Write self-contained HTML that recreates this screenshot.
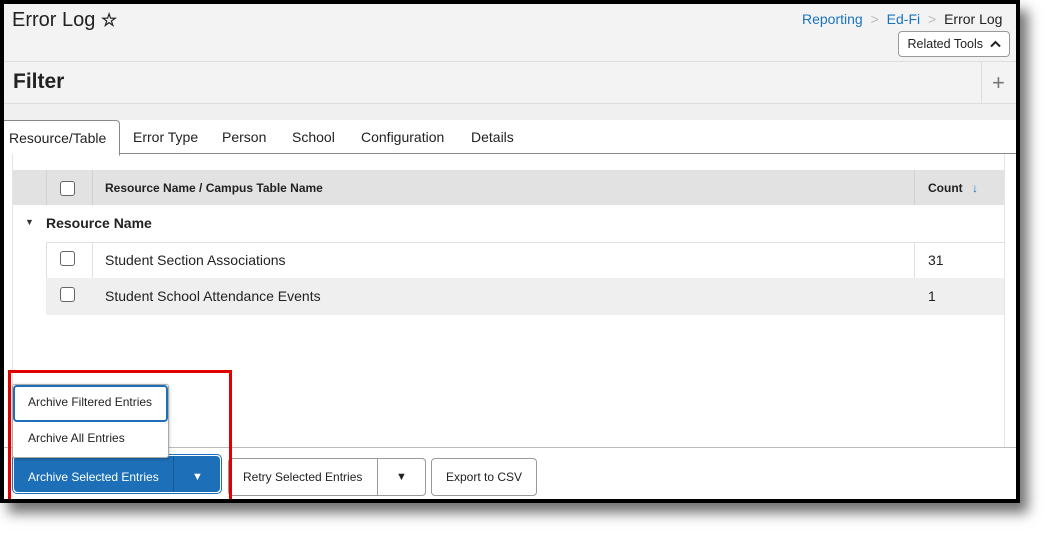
<!DOCTYPE html>
<html><head><style>
body{margin:0;width:1054px;height:538px;background:#fff;font-family:"Liberation Sans",sans-serif;position:relative;overflow:hidden}
.frame{position:absolute;left:0;top:0;width:1012px;height:495px;border:4px solid #000;background:#fff;box-shadow:8px 10px 12px rgba(0,0,0,.55);overflow:hidden}
.a{position:absolute}
.hdr{left:0;top:0;width:1012px;height:57px;background:#f3f3f3;border-bottom:1px solid #ddd}
.flt{left:0;top:58px;width:1012px;height:41px;background:#f3f3f3;border-bottom:1px solid #ddd}
.strip{left:0;top:100px;width:1012px;height:16px;background:#f0f0f0}
.tab{top:125px;font-size:14px;color:#222}
.btn{border:1px solid #999;border-radius:4px;background:#fff;font-size:12px;color:#222}
</style></head><body>
<div class="frame">
<div class="a hdr"></div>
<div class="a" style="left:8px;top:5px;font-size:20px;color:#222">Error Log <span style="font-size:18px;font-weight:bold">☆</span></div>
<div class="a" style="left:798px;top:7px;font-size:14px;color:#1a73c0">Reporting <span style="color:#bbb;margin:0 4px">&gt;</span> Ed-Fi <span style="color:#bbb;margin:0 4px">&gt;</span> <span style="color:#222">Error Log</span></div>
<div class="a btn" style="left:894px;top:27px;width:110px;height:24px;line-height:24px;text-align:center;font-size:12.5px">Related Tools <svg width="11" height="8" viewBox="0 0 11 8" style="margin-left:3px"><path d="M1 6.5L5.5 2 10 6.5" fill="none" stroke="#222" stroke-width="2"/></svg></div>
<div class="a flt"></div>
<div class="a" style="left:977px;top:58px;width:1px;height:41px;background:#ddd"></div>
<div class="a" style="left:9px;top:66px;font-size:21px;font-weight:bold;color:#222">Filter</div>
<div class="a" style="left:988px;top:66px;font-size:22px;color:#777">+</div>
<div class="a strip"></div>
<div class="a" style="left:0;top:149px;width:1012px;height:1px;background:#888"></div>
<div class="a" style="left:0;top:116px;width:115px;height:34px;border:1px solid #888;border-bottom:1px solid #fff;border-left:none;border-radius:0 4px 0 0;background:#fff"></div>
<div class="a tab" style="left:5px;top:126px">Resource/Table</div>
<div class="a tab" style="left:129px">Error Type</div>
<div class="a tab" style="left:218px">Person</div>
<div class="a tab" style="left:288px">School</div>
<div class="a tab" style="left:357px">Configuration</div>
<div class="a tab" style="left:467px">Details</div>
<div class="a" style="left:9px;top:166px;width:991px;height:35px;background:#e2e2e2"></div>
<div class="a" style="left:42px;top:166px;width:1px;height:35px;background:#d0d0d0"></div>
<div class="a" style="left:42px;top:238px;width:1px;height:73px;background:#e0e0e0"></div>
<div class="a" style="left:88px;top:166px;width:1px;height:35px;background:#d0d0d0"></div>
<div class="a" style="left:88px;top:238px;width:1px;height:73px;background:#e0e0e0"></div>
<div class="a" style="left:910px;top:166px;width:1px;height:35px;background:#d0d0d0"></div>
<div class="a" style="left:910px;top:238px;width:1px;height:73px;background:#e0e0e0"></div>
<div class="a" style="left:56px;top:177px;width:13px;height:13px;border:1px solid #666;border-radius:3px;background:#fff"></div>
<div class="a" style="left:101px;top:177px;font-size:12px;font-weight:bold;color:#222">Resource Name / Campus Table Name</div>
<div class="a" style="left:924px;top:177px;font-size:12px;font-weight:bold;color:#222">Count <span style="color:#1a73c0;margin-left:6px">↓</span></div>
<div class="a" style="left:21px;top:213px;font-size:9px;color:#333">▼</div>
<div class="a" style="left:42px;top:211px;font-size:14px;font-weight:bold;color:#222">Resource Name</div>
<div class="a" style="left:42px;top:238px;width:958px;height:1px;background:#e0e0e0"></div>
<div class="a" style="left:42px;top:274px;width:958px;height:37px;background:#efefef"></div>
<div class="a" style="left:56px;top:247px;width:13px;height:13px;border:1px solid #666;border-radius:3px;background:#fff"></div>
<div class="a" style="left:56px;top:283px;width:13px;height:13px;border:1px solid #666;border-radius:3px;background:#fff"></div>
<div class="a" style="left:101px;top:248px;font-size:14px;color:#222">Student Section Associations</div>
<div class="a" style="left:101px;top:284px;font-size:14px;color:#222">Student School Attendance Events</div>
<div class="a" style="left:924px;top:248px;font-size:14px;color:#222">31</div>
<div class="a" style="left:924px;top:284px;font-size:14px;color:#222">1</div>
<div class="a" style="left:8px;top:150px;width:1px;height:293px;background:#e4e4e4"></div>
<div class="a" style="left:1000px;top:150px;width:1px;height:293px;background:#e4e4e4"></div>
<div class="a" style="left:0;top:443px;width:1012px;height:1px;background:#bbb"></div>
<div class="a" style="left:8px;top:450px;width:208px;height:38px;border:1px solid #1a73c0;border-radius:5px"></div>
<div class="a" style="left:10px;top:452px;width:206px;height:36px;background:#1d70b8;border-radius:4px"></div>
<div class="a" style="left:169px;top:452px;width:1px;height:36px;background:#155a96"></div>
<div class="a" style="left:24px;top:466px;font-size:12px;color:#fff">Archive Selected Entries</div>
<div class="a" style="left:188px;top:467px;font-size:11px;color:#fff">▼</div>
<div class="a btn" style="left:224px;top:454px;width:196px;height:36px"></div>
<div class="a" style="left:373px;top:454px;width:1px;height:38px;background:#999"></div>
<div class="a" style="left:239px;top:466px;font-size:12px;color:#222">Retry Selected Entries</div>
<div class="a" style="left:392px;top:467px;font-size:11px;color:#222">▼</div>
<div class="a btn" style="left:427px;top:454px;width:104px;height:36px"></div>
<div class="a" style="left:442px;top:466px;font-size:12px;color:#222">Export to CSV</div>
<div class="a" style="left:8px;top:380px;width:155px;height:72px;background:#fff;border:1px solid #aaa;border-radius:3px;box-shadow:0 1px 3px rgba(0,0,0,.3)"></div>
<div class="a" style="left:9px;top:381px;width:151px;height:33px;border:2px solid #1d70b8;border-radius:4px"></div>
<div class="a" style="left:24px;top:391px;font-size:12px;color:#222">Archive Filtered Entries</div>
<div class="a" style="left:24px;top:427px;font-size:12px;color:#222">Archive All Entries</div>
<div class="a" style="left:4px;top:366px;width:218px;height:129px;border:3px solid #e00000;border-bottom:none"></div>
</div>
</body></html>
